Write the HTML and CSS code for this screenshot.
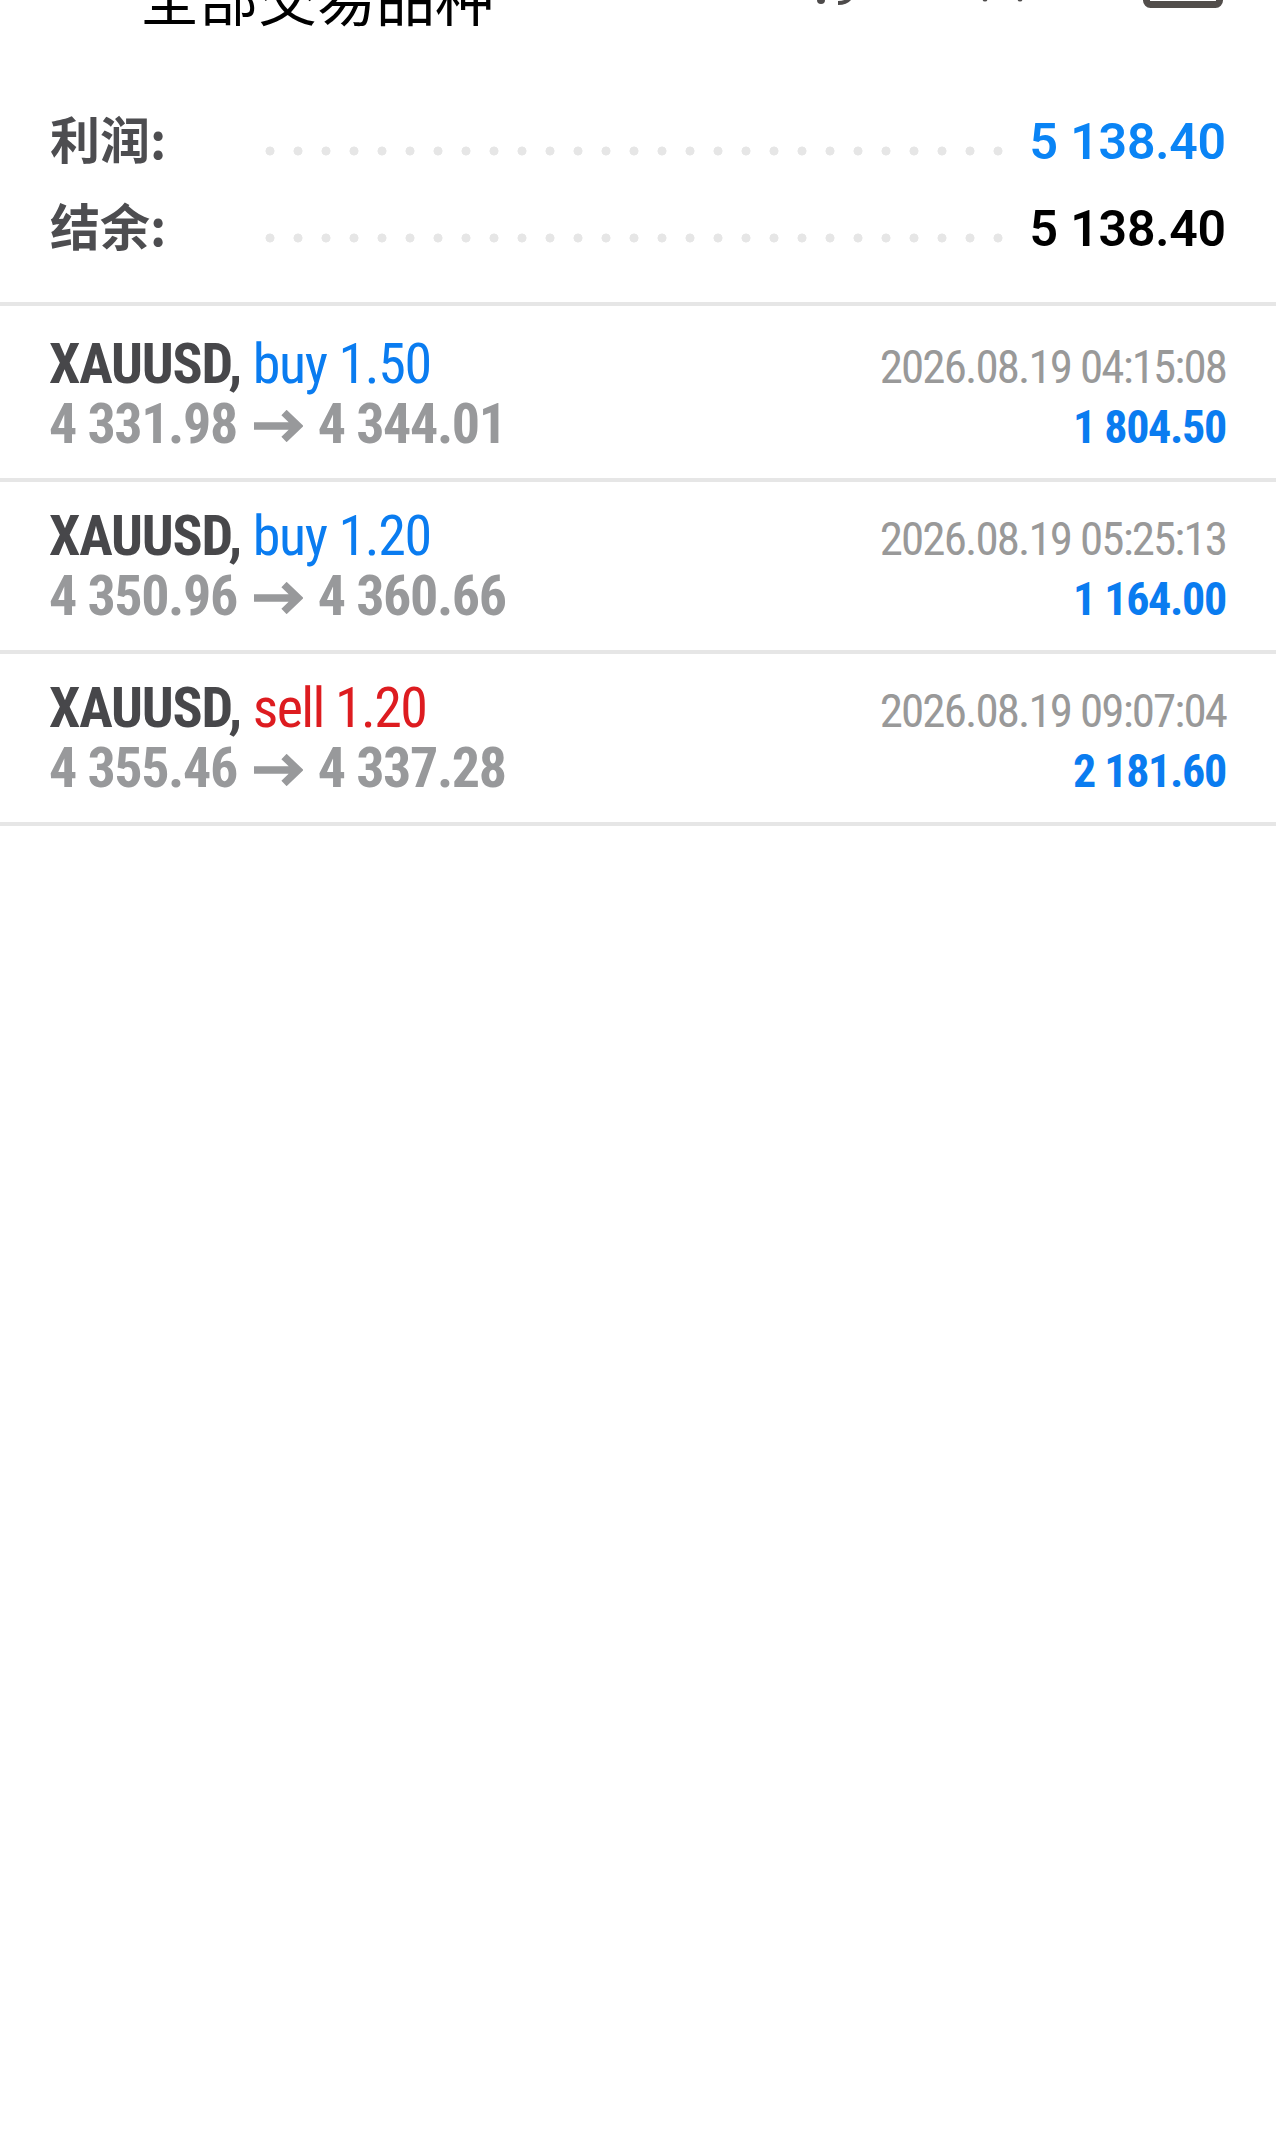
FILE: index.html
```html
<!DOCTYPE html>
<html lang="zh-CN">
<head>
    <meta charset="UTF-8">
    <title>历史</title>
    <link rel="stylesheet" href="styles.css">
</head>
<body>
    <header class="topbar">
        <h1 class="topbar-title">全部交易品种</h1>
        <svg class="topbar-icons" width="406" height="8" viewBox="0 0 406 8">
            <circle cx="4" cy="0" r="4" fill="#4d4b4b"/>
            <path d="M21 3C27 3 31 1 33 -2" fill="none" stroke="#4d4b4b" stroke-width="4"/>
            <circle cx="168" cy="-1" r="2.5" fill="#4d4b4b"/>
            <circle cx="203" cy="-1" r="2.5" fill="#4d4b4b"/>
            <rect x="329.5" y="-20" width="73" height="24.5" rx="4" fill="none" stroke="#524e4b" stroke-width="7"/>
        </svg>
    </header>

    <section class="summary">
        <div class="summary-row">
            <span class="summary-label">利润:</span>
            <span class="dots"></span>
            <span class="summary-value profit">5 138.40</span>
        </div>
        <div class="summary-row">
            <span class="summary-label">结余:</span>
            <span class="dots"></span>
            <span class="summary-value">5 138.40</span>
        </div>
    </section>

    <section class="deals">
        <div class="deal">
            <div class="deal-main">
                <div class="deal-title"><b>XAUUSD,</b> <span class="buy">buy 1.50</span></div>
                <div class="deal-price">4 331.98 <svg class="arrow" viewBox="0 0 49 32"><path d="M0 16H44M30 2.5L44 16L30 29.5" fill="none" stroke="#98999b" stroke-width="7.5"/></svg> 4 344.01</div>
            </div>
            <div class="deal-side">
                <div class="deal-time">2026.08.19 04:15:08</div>
                <div class="deal-profit">1 804.50</div>
            </div>
        </div>
        <div class="deal">
            <div class="deal-main">
                <div class="deal-title"><b>XAUUSD,</b> <span class="buy">buy 1.20</span></div>
                <div class="deal-price">4 350.96 <svg class="arrow" viewBox="0 0 49 32"><path d="M0 16H44M30 2.5L44 16L30 29.5" fill="none" stroke="#98999b" stroke-width="7.5"/></svg> 4 360.66</div>
            </div>
            <div class="deal-side">
                <div class="deal-time">2026.08.19 05:25:13</div>
                <div class="deal-profit">1 164.00</div>
            </div>
        </div>
        <div class="deal">
            <div class="deal-main">
                <div class="deal-title"><b>XAUUSD,</b> <span class="sell">sell 1.20</span></div>
                <div class="deal-price">4 355.46 <svg class="arrow" viewBox="0 0 49 32"><path d="M0 16H44M30 2.5L44 16L30 29.5" fill="none" stroke="#98999b" stroke-width="7.5"/></svg> 4 337.28</div>
            </div>
            <div class="deal-side">
                <div class="deal-time">2026.08.19 09:07:04</div>
                <div class="deal-profit">2 181.60</div>
            </div>
        </div>
    </section>
</body>
</html>
```

FILE: styles.css
```css
* {
    box-sizing: border-box;
    margin: 0;
    padding: 0;
}

body {
    background: #fff;
    color: #000;
    font-family: Roboto, "Noto Sans CJK SC", sans-serif;
    font-stretch: 75%;
    overflow: hidden;
}

.topbar {
    height: 32px;
    padding: 0 53px 0 140px;
    display: flex;
    justify-content: space-between;
    align-items: flex-start;
}

.topbar-title {
    margin-top: -40px;
    font-family: "Noto Sans CJK SC", sans-serif;
    font-size: 59px;
    font-weight: 400;
    line-height: 72px;
}

.topbar-icons {
    overflow: hidden;
}

.summary {
    height: 274px;
    padding: 64px 50px 0;
    border-bottom: 4px solid #e6e6e6;
}

.summary-row {
    display: flex;
    align-items: center;
    height: 87px;
}

.summary-label {
    width: 206px;
    margin-top: -6px;
    font-family: "Noto Sans CJK SC", sans-serif;
    font-size: 50px;
    font-weight: 700;
    color: #4d4d50;
}

.dots {
    flex: 0 0 756px;
    height: 10px;
    margin-top: 22px;
    background: radial-gradient(circle, #e6e6e6 4.2px, transparent 4.8px) 0 0 / 28px 10px repeat-x;
}

.summary-value {
    margin: 5px 0 0 auto;
    font-size: 50px;
    font-weight: 600;
    font-stretch: 90%;
    letter-spacing: -0.2px;
}

.profit {
    color: #0a84f5;
}

.deal {
    height: 172px;
    padding: 24px 50px 0 49px;
    border-bottom: 4px solid #e6e6e6;
    display: flex;
    justify-content: space-between;
}

.deal:first-child {
    height: 176px;
    padding-top: 28px;
}

.deal-title {
    font-size: 56px;
    line-height: 60px;
    letter-spacing: -1.2px;
    color: #47474a;
}

.buy {
    letter-spacing: -1.3px;
    color: #0a7cf0;
}

.sell {
    letter-spacing: -1.6px;
    color: #dd1c20;
}

.deal-price {
    font-size: 56px;
    font-weight: 700;
    line-height: 60px;
    letter-spacing: -1.4px;
    color: #98999b;
}

.arrow {
    width: 49px;
    height: 32px;
    margin: 0 3px 0 6px;
    vertical-align: 1px;
}

.deal-side {
    padding-top: 3px;
    text-align: right;
}

.deal-time {
    font-size: 47px;
    line-height: 60px;
    letter-spacing: -1.9px;
    color: #999;
}

.deal-profit {
    font-size: 46px;
    font-weight: 700;
    line-height: 60px;
    letter-spacing: -1.3px;
    color: #0a7cf0;
}
```
